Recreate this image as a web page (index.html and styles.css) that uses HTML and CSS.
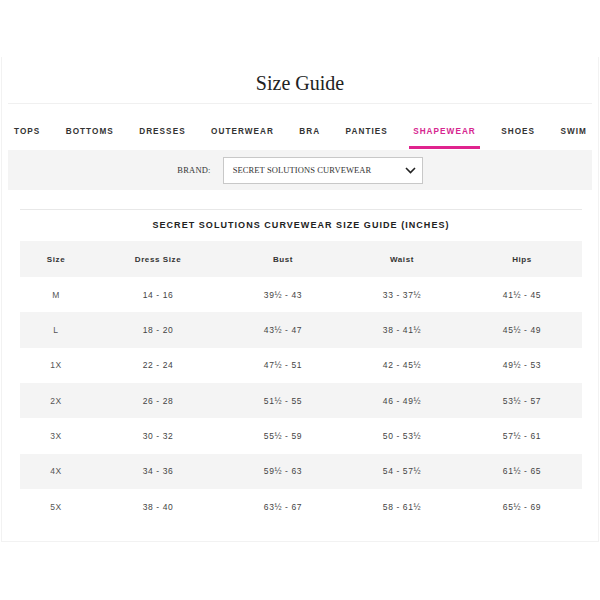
FILE: index.html
```html
<!DOCTYPE html>
<html lang="en">
<head>
<meta charset="utf-8">
<title>Size Guide</title>
<link rel="stylesheet" href="styles.css">
</head>
<body>
<div class="panel">
  <h1 class="title">Size Guide</h1>
  <nav class="tabs">
    <span class="tab">TOPS</span>
    <span class="tab">BOTTOMS</span>
    <span class="tab">DRESSES</span>
    <span class="tab">OUTERWEAR</span>
    <span class="tab">BRA</span>
    <span class="tab">PANTIES</span>
    <span class="tab active">SHAPEWEAR</span>
    <span class="tab">SHOES</span>
    <span class="tab">SWIM</span>
  </nav>
  <div class="brand-bar">
    <span class="brand-label">BRAND:</span>
    <div class="select">
      <span class="select-text">SECRET SOLUTIONS CURVEWEAR</span>
      <svg class="chevron" width="11" height="7" viewBox="0 0 11 7"><path d="M1 1 L5.5 5.5 L10 1" fill="none" stroke="#222" stroke-width="1.6"/></svg>
    </div>
  </div>
  <section class="content">
    <h2 class="guide-title">SECRET SOLUTIONS CURVEWEAR SIZE GUIDE (INCHES)</h2>
    <table class="chart">
      <colgroup>
        <col class="c1"><col class="c2"><col class="c3"><col class="c4"><col class="c5">
      </colgroup>
      <thead>
        <tr><th>Size</th><th>Dress Size</th><th>Bust</th><th>Waist</th><th>Hips</th></tr>
      </thead>
      <tbody>
        <tr><td class="sz">M</td><td>14 - 16</td><td>39½ - 43</td><td>33 - 37½</td><td>41½ - 45</td></tr>
        <tr><td class="sz">L</td><td>18 - 20</td><td>43½ - 47</td><td>38 - 41½</td><td>45½ - 49</td></tr>
        <tr><td class="sz">1X</td><td>22 - 24</td><td>47½ - 51</td><td>42 - 45½</td><td>49½ - 53</td></tr>
        <tr><td class="sz">2X</td><td>26 - 28</td><td>51½ - 55</td><td>46 - 49½</td><td>53½ - 57</td></tr>
        <tr><td class="sz">3X</td><td>30 - 32</td><td>55½ - 59</td><td>50 - 53½</td><td>57½ - 61</td></tr>
        <tr><td class="sz">4X</td><td>34 - 36</td><td>59½ - 63</td><td>54 - 57½</td><td>61½ - 65</td></tr>
        <tr><td class="sz">5X</td><td>38 - 40</td><td>63½ - 67</td><td>58 - 61½</td><td>65½ - 69</td></tr>
      </tbody>
    </table>
  </section>
</div>
</body>
</html>
```
FILE: styles.css
```css
* { box-sizing: border-box; }
html, body { margin: 0; padding: 0; background: #fff; }
body { font-family: "Liberation Sans", Arial, sans-serif; color: #222; }

.panel {
  margin: 57px 1px 0 1px;
  border: 1px solid #f2f2f2;
  border-top: none;
  padding: 0 6px 17px 6px;
}

.title {
  margin: 0;
  padding: 13px 0 7px;
  font-family: "Liberation Serif", "Times New Roman", serif;
  font-weight: normal;
  font-size: 20px;
  line-height: 26px;
  text-align: center;
  color: #222;
  border-bottom: 1px solid #f0f0f0;
}

.tabs {
  display: flex;
  justify-content: space-between;
  padding: 0 1px 1px 2px;
}
.tab {
  padding: 22px 4px 8px;
  font-size: 8.2px;
  line-height: 12px;
  font-weight: bold;
  letter-spacing: 1.05px;
  color: #333;
  border-bottom: 3px solid transparent;
}
.tab.active {
  color: #d6268f;
  border-bottom-color: #e0238e;
}

.brand-bar {
  height: 40px;
  background: #f4f4f4;
  display: flex;
  align-items: center;
  justify-content: center;
  gap: 12px;
  font-family: "Liberation Serif", "Times New Roman", serif;
  font-size: 8.5px;
  color: #333;
}
.brand-label { letter-spacing: 0.2px; }
.select {
  width: 200px;
  height: 27px;
  background: #fff;
  border: 1px solid #c8c8c8;
  display: flex;
  align-items: center;
  justify-content: space-between;
  padding: 0 6px 0 9px;
}
.select-text { letter-spacing: 0.1px; }
.chevron { display: block; }

.content {
  margin-top: 19px;
  padding: 0 10px 0 12px;
}
.guide-title {
  margin: 0;
  border-top: 1px solid #e8e8e8;
  padding: 8px 0 9px;
  font-size: 9px;
  line-height: 14px;
  letter-spacing: 1.05px;
  font-weight: bold;
  text-align: center;
  color: #222;
}

.chart {
  width: 100%;
  border-collapse: collapse;
  table-layout: fixed;
}
.c1 { width: 72px; }
.c2 { width: 132px; }
.c3 { width: 118px; }
.c4 { width: 120px; }
.c5 { width: 120px; }

.chart th {
  height: 36px;
  background: #f4f4f4;
  font-size: 8px;
  letter-spacing: 0.6px;
  font-weight: bold;
  color: #333;
  text-align: center;
  padding: 0;
}
.chart td {
  height: 35.33px;
  font-size: 8.5px;
  letter-spacing: 0.6px;
  color: #444;
  text-align: center;
  padding: 0;
}
.chart tbody tr:nth-child(even) td { background: #f4f4f4; }
.chart td.sz { color: #555; }
```
